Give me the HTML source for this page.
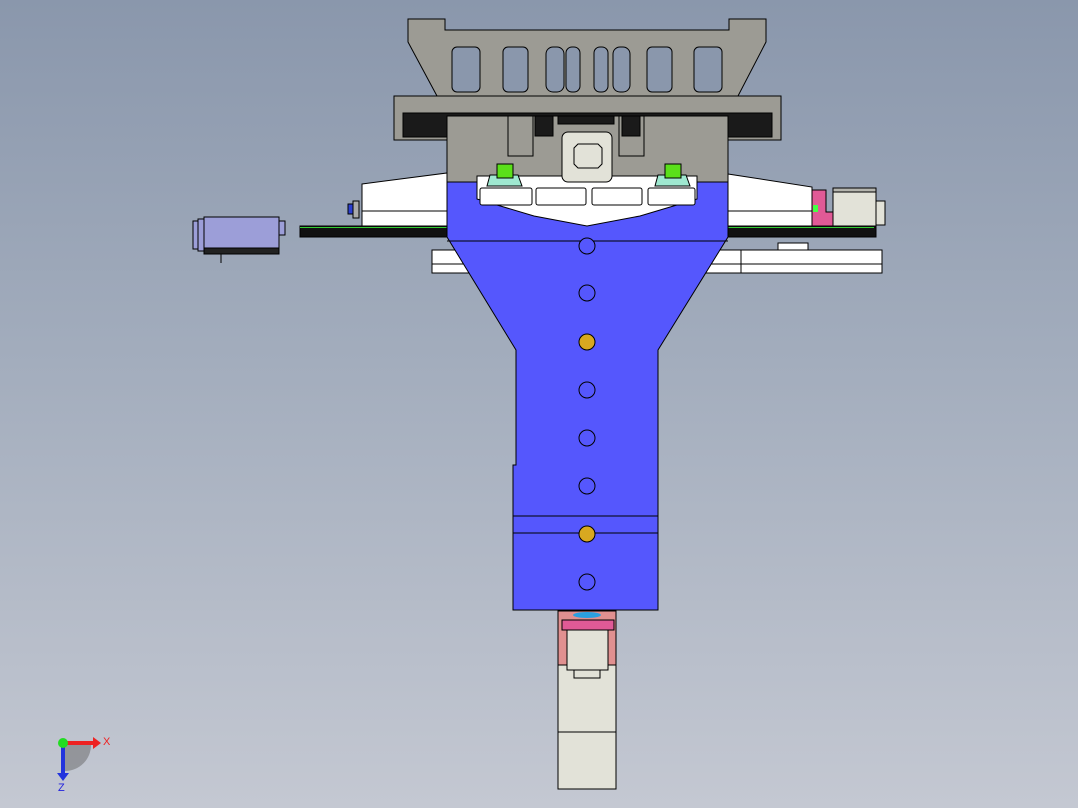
<!DOCTYPE html>
<html><head><meta charset="utf-8"><style>
html,body{margin:0;padding:0;width:1078px;height:808px;overflow:hidden}
body{background:linear-gradient(#8a97ac 0%,#a3adbd 45%,#c4c8d2 100%);font-family:"Liberation Sans",sans-serif}
svg{position:absolute;left:0;top:0}
</style></head><body>
<svg width="1078" height="808" viewBox="0 0 1078 808" stroke="#000" stroke-width="1">
<polygon points="408,19 445,19 445,30 729,30 729,19 766,19 766,42 738,96 437,96 408,42" fill="#9c9b94"/>
<g fill="#8a97ac">
<rect x="452" y="47" width="28" height="45" rx="5"/>
<rect x="503" y="47" width="25" height="45" rx="5"/>
<rect x="546" y="47" width="18" height="45" rx="7"/>
<rect x="566" y="47" width="14" height="45" rx="6"/>
<rect x="594" y="47" width="14" height="45" rx="6"/>
<rect x="613" y="47" width="17" height="45" rx="7"/>
<rect x="647" y="47" width="25" height="45" rx="5"/>
<rect x="694" y="47" width="28" height="45" rx="5"/>
</g>
<rect x="394" y="96" width="387" height="44" fill="#9c9b94"/>
<rect x="403" y="113" width="369" height="24" fill="#1a1a1a"/>
<polygon points="362,184 447,173 447,227 362,227" fill="#fff"/>
<line x1="362" y1="211" x2="447" y2="211"/>
<polygon points="728,174 812,187 812,227 728,227" fill="#fff"/>
<line x1="728" y1="211" x2="812" y2="211"/>
<rect x="300" y="226" width="150" height="11" fill="#111"/>
<line x1="300" y1="227.5" x2="447" y2="227.5" stroke="#3c3"/>
<rect x="725" y="226" width="151" height="11" fill="#111"/>
<line x1="728" y1="227.5" x2="874" y2="227.5" stroke="#3c3"/>
<rect x="348" y="204" width="5" height="10" fill="#2b3fd0"/>
<rect x="353" y="201" width="6" height="17" fill="#aaa"/>
<rect x="432" y="250" width="450" height="14" fill="#fff"/>
<rect x="432" y="264" width="450" height="9" fill="#fff"/>
<line x1="741" y1="250" x2="741" y2="273"/>
<rect x="778" y="243" width="30" height="7" fill="#fff"/>
<polygon points="812,190 826,190 826,212 833,212 833,226 812,226" fill="#e05a96"/>
<rect x="813" y="205" width="5" height="7" fill="#4f4" stroke="none"/>
<rect x="833" y="188" width="43" height="38" fill="#e2e2d8"/>
<rect x="833" y="188" width="43" height="4" fill="#b5b5ae"/>
<rect x="876" y="201" width="9" height="24" fill="#e2e2d8"/>
<rect x="193" y="221" width="10" height="28" fill="#9c9ed8"/>
<rect x="198" y="219" width="10" height="32" fill="#9c9ed8"/>
<rect x="204" y="217" width="75" height="31" fill="#9c9ed8"/>
<rect x="279" y="221" width="6" height="14" fill="#9c9ed8"/>
<rect x="204" y="248" width="75" height="6" fill="#222"/>
<line x1="221" y1="254" x2="221" y2="263"/>
<polygon points="447,170 728,170 728,237 658,350 658,610 513,610 513,465 516,465 516,350 447,237" fill="#5557fd"/>
<rect x="447" y="116" width="281" height="66" fill="#9c9b94"/>
<polygon points="477,176 697,176 697,199 640,216 587,226 534,216 477,199" fill="#fff"/>
<rect x="508" y="116" width="25" height="40" fill="#9c9b94"/>
<rect x="619" y="116" width="25" height="40" fill="#9c9b94"/>
<rect x="535" y="116" width="18" height="20" fill="#1a1a1a"/>
<rect x="622" y="116" width="18" height="20" fill="#1a1a1a"/>
<rect x="558" y="116" width="56" height="8" fill="#1a1a1a"/>
<g fill="#fff"><rect x="480" y="188" width="52" height="17" rx="2"/><rect x="536" y="188" width="50" height="17" rx="2"/><rect x="592" y="188" width="50" height="17" rx="2"/><rect x="648" y="188" width="47" height="17" rx="2"/></g>
<polygon points="490,175 518,175 522,186 487,186" fill="#9fe8d0"/>
<rect x="497" y="164" width="16" height="14" fill="#5ae01a"/>
<polygon points="658,175 686,175 690,186 655,186" fill="#9fe8d0"/>
<rect x="665" y="164" width="16" height="14" fill="#5ae01a"/>
<rect x="562" y="132" width="50" height="50" rx="6" fill="#e2e2d8"/>
<polygon points="578,144 598,144 602,148 602,164 598,168 578,168 574,164 574,148" fill="#e2e2d8"/>
<line x1="447" y1="241" x2="728" y2="241"/>
<line x1="513" y1="516" x2="658" y2="516"/>
<line x1="513" y1="533" x2="658" y2="533"/>
<g fill="#5557fd">
<circle cx="587" cy="246" r="8"/><circle cx="587" cy="293" r="8"/><circle cx="587" cy="390" r="8"/><circle cx="587" cy="438" r="8"/><circle cx="587" cy="486" r="8"/><circle cx="587" cy="582" r="8"/>
</g>
<circle cx="587" cy="342" r="8" fill="#d8a820"/>
<circle cx="587" cy="534" r="8" fill="#d8a820"/>
<rect x="558" y="611" width="58" height="178" fill="#e2e2d8"/>
<line x1="558" y1="732" x2="616" y2="732"/>
<rect x="558" y="611" width="58" height="54" fill="#e09090"/>
<rect x="562" y="620" width="52" height="10" fill="#e05a96"/>
<rect x="567" y="630" width="41" height="40" fill="#e2e2d8"/>
<rect x="574" y="670" width="26" height="8" fill="#e2e2d8"/>
<ellipse cx="587" cy="615" rx="14" ry="3" fill="#2aa0e0" stroke="none"/>
<path d="M65,745 L91,745 A26,26 0 0 1 65,771 Z" fill="#666" stroke="none" opacity="0.5"/>
<rect x="61" y="743" width="4" height="32" fill="#2233dd" stroke="none"/>
<polygon points="57,773 69,773 63,781" fill="#2233dd" stroke="none"/>
<rect x="63" y="741" width="30" height="4" fill="#e22" stroke="none"/>
<polygon points="93,737 101,743 93,749" fill="#e22" stroke="none"/>
<circle cx="63" cy="743" r="5" fill="#2d2" stroke="none"/>
<text x="103" y="745" font-size="11" fill="#e22" stroke="none">X</text>
<text x="58" y="791" font-size="11" fill="#22d" stroke="none">Z</text>
</svg>
</body></html>
